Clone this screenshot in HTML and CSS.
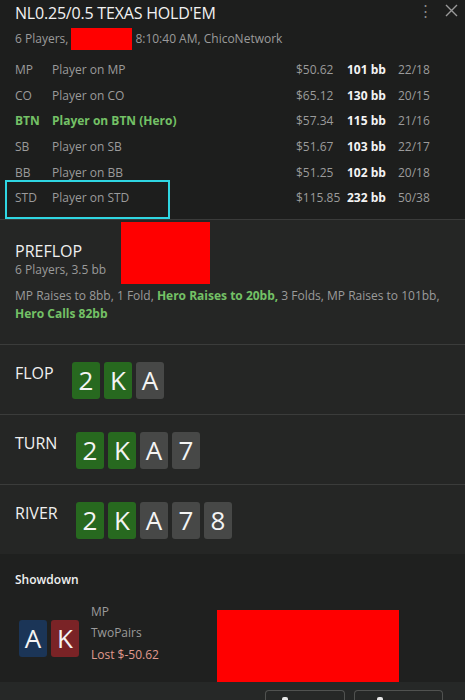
FILE: index.html
```html
<!DOCTYPE html>
<html lang="en">
<head>
    <meta charset="UTF-8">
    <meta name="viewport" content="width=device-width, initial-scale=1.0">
    <title>Hand Replay</title>
    <link rel="stylesheet" href="styles.css">
</head>
<body>
    <div class="header">
        <div class="title-row">
            <h1>NL0.25/0.5 TEXAS HOLD'EM</h1>
            <div class="tools">
                <span class="dots">&#8942;</span>
                <svg class="close" width="13" height="13" viewBox="0 0 13 13">
                    <path d="M1 1 L12 12 M12 1 L1 12" stroke="#9a9a9a" stroke-width="1.4" fill="none"/>
                </svg>
            </div>
        </div>
        <div class="subtitle">6 Players, <span class="redact small"></span> 8:10:40 AM, ChicoNetwork</div>

        <table class="players">
            <tr>
                <td class="pos">MP</td><td class="name">Player on MP</td>
                <td class="money">$50.62</td><td class="bb">101 bb</td><td class="ratio">22/18</td>
            </tr>
            <tr>
                <td class="pos">CO</td><td class="name">Player on CO</td>
                <td class="money">$65.12</td><td class="bb">130 bb</td><td class="ratio">20/15</td>
            </tr>
            <tr class="hero">
                <td class="pos">BTN</td><td class="name">Player on BTN (Hero)</td>
                <td class="money">$57.34</td><td class="bb">115 bb</td><td class="ratio">21/16</td>
            </tr>
            <tr>
                <td class="pos">SB</td><td class="name">Player on SB</td>
                <td class="money">$51.67</td><td class="bb">103 bb</td><td class="ratio">22/17</td>
            </tr>
            <tr>
                <td class="pos">BB</td><td class="name">Player on BB</td>
                <td class="money">$51.25</td><td class="bb">102 bb</td><td class="ratio">20/18</td>
            </tr>
            <tr>
                <td class="pos">STD</td><td class="name">Player on STD</td>
                <td class="money">$115.85</td><td class="bb">232 bb</td><td class="ratio">50/38</td>
            </tr>
        </table>
        <div class="highlight"></div>
    </div>

    <div class="street preflop">
        <div class="preflop-top">
            <div>
                <h2>PREFLOP</h2>
                <div class="meta">6 Players, 3.5 bb</div>
            </div>
            <span class="redact big"></span>
        </div>
        <p class="actions">MP Raises to 8bb, 1 Fold, <b>Hero Raises to 20bb,</b> 3 Folds, MP Raises to 101bb, <b>Hero Calls 82bb</b></p>
    </div>

    <div class="street board">
        <h2>FLOP</h2>
        <div class="cards">
            <span class="card green">2</span><span class="card green">K</span><span class="card gray">A</span>
        </div>
    </div>

    <div class="street board">
        <h2>TURN</h2>
        <div class="cards">
            <span class="card green">2</span><span class="card green">K</span><span class="card gray">A</span><span class="card gray">7</span>
        </div>
    </div>

    <div class="street board last">
        <h2>RIVER</h2>
        <div class="cards">
            <span class="card green">2</span><span class="card green">K</span><span class="card gray">A</span><span class="card gray">7</span><span class="card gray">8</span>
        </div>
    </div>

    <div class="showdown">
        <h3>Showdown</h3>
        <div class="sd-row">
            <div class="cards">
                <span class="card blue">A</span><span class="card red">K</span>
            </div>
            <div class="sd-info">
                <div>MP</div>
                <div>TwoPairs</div>
                <div class="lost">Lost $-50.62</div>
            </div>
            <span class="redact wide"></span>
        </div>
    </div>

    <div class="footer">
        <button class="btn one"><span class="glyph"></span></button>
        <button class="btn two"><span class="glyph"></span></button>
    </div>
</body>
</html>
```

FILE: styles.css
```css
body {
    font-family: "Open Sans", "Noto Sans", sans-serif;
    margin: 0;
    padding: 0;
    background-color: #1e1f1e;
    color: #9b9b9b;
    width: 465px;
    height: 700px;
    overflow: hidden;
}

.header {
    position: relative;
    padding: 2px 15px 8px 15px;
    background-color: #1d1e1d;
    border-bottom: 1px solid #3a3b3a;
}

.title-row {
    display: flex;
    justify-content: space-between;
    align-items: flex-start;
}

h1 {
    font-size: 16px;
    font-weight: 400;
    color: #f2f2f2;
    margin: 0;
    line-height: 22px;
    letter-spacing: -0.2px;
}

.tools {
    display: flex;
    align-items: center;
    gap: 12px;
    margin-top: 1px;
    margin-right: -8px;
}

.dots {
    color: #8a8a8a;
    font-size: 15px;
    line-height: 14px;
}

.subtitle {
    font-size: 12px;
    margin-top: 4px;
    line-height: 18px;
    display: flex;
    align-items: center;
    gap: 3px;
}

.redact {
    background-color: #ff0000;
    display: inline-block;
}

.redact.small {
    width: 61px;
    height: 22px;
}

.players {
    border-collapse: collapse;
    width: 420px;
    margin-top: 7px;
    font-size: 12px;
}

.players td {
    padding: 0;
    height: 25.6px;
    white-space: nowrap;
}

.pos {
    width: 37px;
}

.money {
    width: 51px;
}

.bb {
    width: 51px;
    color: #f4f4f4;
    font-weight: 700;
}

.ratio {
    width: 37px;
}

.hero .pos,
.hero .name {
    color: #74c166;
    font-weight: 700;
}

.highlight {
    position: absolute;
    left: 5px;
    top: 180px;
    width: 161px;
    height: 35px;
    border: 2px solid #2fd6e2;
}

.street {
    background-color: #252625;
    border-bottom: 1px solid #3b3c3b;
    padding: 0 15px;
}

h2 {
    font-size: 16px;
    font-weight: 400;
    color: #f0f0f0;
    margin: 0;
    line-height: 20px;
}

.preflop {
    height: 124px;
}

.preflop-top {
    display: flex;
    align-items: flex-start;
}

.preflop-top h2 {
    margin-top: 21px;
}

.meta {
    font-size: 12px;
    line-height: 18px;
}

.redact.big {
    width: 89px;
    height: 62px;
    margin-left: 15px;
    margin-top: 2px;
}

.actions {
    margin: 3px 0 0 0;
    font-size: 12px;
    line-height: 18px;
}

.actions b {
    color: #74c166;
}

.board {
    display: flex;
    align-items: flex-start;
    height: 69px;
}

.board h2 {
    margin-top: 18px;
    width: 57px;
}

.board + .board h2 {
    width: 61px;
}

.board .cards {
    margin-top: 17px;
}

.board.last {
    border-bottom: none;
}

.cards {
    display: flex;
    gap: 4px;
}

.card {
    width: 28px;
    height: 37px;
    border-radius: 3px;
    color: #f4f4f4;
    font-size: 26px;
    display: flex;
    align-items: center;
    justify-content: center;
    font-weight: 400;
}

.green {
    background-color: #27691f;
}

.gray {
    background-color: #474847;
}

.blue {
    background-color: #1b3557;
}

.red {
    background-color: #7a2326;
}

.showdown {
    background-color: #1f201f;
    padding: 17px 15px 0 19px;
    height: 111px;
}

h3 {
    font-size: 12px;
    font-weight: 600;
    color: #f0f0f0;
    margin: 0 0 0 -4px;
    line-height: 18px;
}

.sd-row {
    display: flex;
    align-items: flex-start;
    margin-top: 14px;
}

.sd-row .cards {
    margin-top: 17px;
}

.sd-info {
    font-size: 12px;
    line-height: 21.5px;
    margin-left: 12px;
    margin-top: -2px;
}

.lost {
    color: #e09a8e;
}

.redact.wide {
    width: 182px;
    height: 72px;
    margin-left: 58px;
    margin-top: 7px;
}

.footer {
    background-color: #262827;
    height: 30px;
    display: flex;
    justify-content: flex-end;
    gap: 9px;
    padding: 8px 22px 0 0;
    box-sizing: border-box;
}

.btn {
    background-color: #262827;
    border: 1px solid #505250;
    border-bottom: none;
    border-radius: 4px 4px 0 0;
    height: 22px;
    position: relative;
}

.btn.one {
    width: 80px;
}

.btn.two {
    width: 89px;
}

.glyph {
    position: absolute;
    top: 6px;
    width: 6px;
    height: 6px;
    background-color: #e8e8e8;
    border-radius: 2px;
}

.btn.one .glyph {
    left: 16px;
}

.btn.two .glyph {
    left: 22px;
}
```
